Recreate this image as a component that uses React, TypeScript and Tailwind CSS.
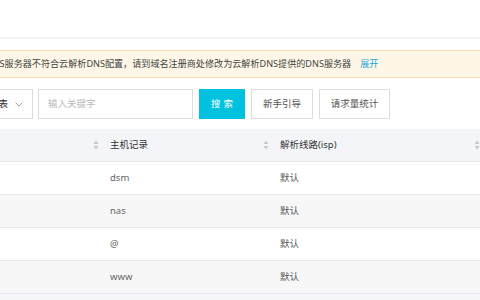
const rows = [
  { host: "dsm", line: "默认", alt: false },
  { host: "nas", line: "默认", alt: true },
  { host: "@", line: "默认", alt: false },
  { host: "www", line: "默认", alt: true },
];

function SortIcon() {
  return (
    <svg width="6" height="10" viewBox="0 0 6 10" className="shrink-0">
      <path d="M3 0.5 L5.5 4 L0.5 4 Z" fill="#c8c8c8" />
      <path d="M3 9.5 L5.5 6 L0.5 6 Z" fill="#c8c8c8" />
    </svg>
  );
}

export default function App() {
  return (
    <div
      className="w-[480px] h-[300px] overflow-hidden bg-white text-[9.5px] text-[#333]"
      style={{ fontFamily: '"Noto Sans", "Noto Sans CJK SC", sans-serif' }}
    >
      <div className="-ml-[60px] w-[560px]">
        <div className="h-[37px]" />
        <div className="h-[2px] bg-[#f4f4f4]" />
        <div className="h-[11px]" />

        {/* notice */}
        <div className="h-[28px] flex items-center bg-[#fef7e8] border-y border-[#fbe2b4] pl-[46px] text-[9.1px]">
          <span className="text-[#444] whitespace-nowrap">DNS服务器不符合云解析DNS配置，请到域名注册商处修改为云解析DNS提供的DNS服务器</span>
          <span className="ml-[9px] text-[#1aa6d6] whitespace-nowrap">展开</span>
        </div>

        {/* toolbar */}
        <div className="mt-[11px] flex items-center h-[30px]">
          <div className="ml-[12px] w-[81px] h-full border border-[#dcdcdc] flex items-center justify-end pr-[9px] gap-[7px]">
            <span className="whitespace-nowrap">解析列表</span>
            <svg width="8" height="5" viewBox="0 0 8 5">
              <path d="M0.5 0.5 L4 4 L7.5 0.5" fill="none" stroke="#999" strokeWidth="0.9" />
            </svg>
          </div>
          <div className="ml-[5px] w-[155px] h-full border border-[#dcdcdc] flex items-center pl-[9px] text-[#bbb]">
            输入关键字
          </div>
          <div className="ml-[6px] w-[46px] h-full bg-[#00c1de] text-white flex items-center justify-center tracking-[3px] pl-[3px]">
            搜索
          </div>
          <div className="ml-[6px] w-[62px] h-full border border-[#dcdcdc] flex items-center justify-center text-[#555]">
            新手引导
          </div>
          <div className="ml-[6px] w-[71px] h-full border border-[#dcdcdc] flex items-center justify-center text-[#555]">
            请求量统计
          </div>
        </div>

        {/* table */}
        <div className="mt-[10px]">
          <div className="flex h-[33px] bg-[#f4f5f9] border-b border-[#e6e7eb] items-center">
            <div className="w-[163px] flex justify-end pr-[4px]">
              <SortIcon />
            </div>
            <div className="w-[170px] flex items-center justify-between pl-[7px] pr-[4px]">
              <span>主机记录</span>
              <SortIcon />
            </div>
            <div className="w-[211px] flex items-center justify-between pl-[7px] pr-[4px]">
              <span>解析线路(isp)</span>
              <SortIcon />
            </div>
          </div>
          {rows.map((r) => (
            <div
              key={r.host}
              className={`flex h-[33px] items-center border-b border-[#e8e8ec] ${r.alt ? "bg-[#f7f7f8]" : "bg-white"}`}
            >
              <div className="w-[163px]" />
              <div className="w-[170px] pl-[7px] text-[#666]">{r.host}</div>
              <div className="w-[211px] pl-[7px] text-[#555]">{r.line}</div>
            </div>
          ))}
          <div className="h-[33px] bg-[#f5f6f9]" />
        </div>
      </div>
    </div>
  );
}
